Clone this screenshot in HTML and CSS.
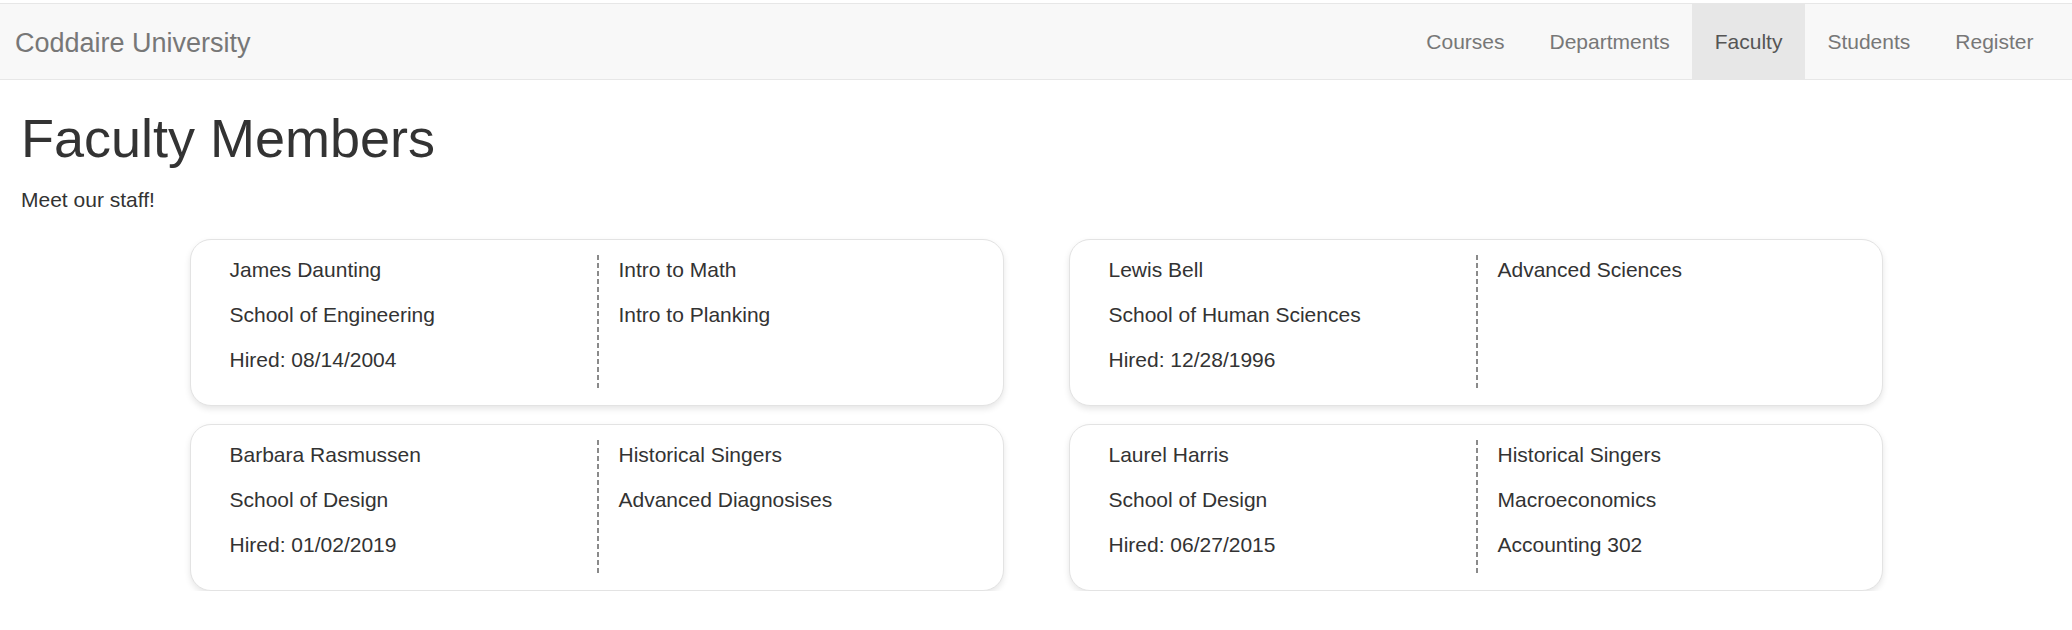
FILE: index.html
```html
<!DOCTYPE html>
<html lang="en">
<head>
<meta charset="utf-8">
<title>Faculty Members - Coddaire University</title>
<link rel="stylesheet" href="styles.css">
</head>
<body>
<nav class="navbar">
  <a class="brand" href="#">Coddaire University</a>
  <ul class="nav">
    <li><a href="#">Courses</a></li>
    <li><a href="#">Departments</a></li>
    <li class="active"><a href="#">Faculty</a></li>
    <li><a href="#">Students</a></li>
    <li><a href="#">Register</a></li>
  </ul>
</nav>
<main class="content">
  <h1 class="title">Faculty Members</h1>
  <p class="lead">Meet our staff!</p>
  <div class="cards">
    <div class="card">
      <div class="col info">
        <p>James Daunting</p>
        <p>School of Engineering</p>
        <p>Hired: 08/14/2004</p>
      </div>
      <div class="col courses">
        <p>Intro to Math</p>
        <p>Intro to Planking</p>
      </div>
    </div>
    <div class="card">
      <div class="col info">
        <p>Lewis Bell</p>
        <p>School of Human Sciences</p>
        <p>Hired: 12/28/1996</p>
      </div>
      <div class="col courses">
        <p>Advanced Sciences</p>
      </div>
    </div>
    <div class="card">
      <div class="col info">
        <p>Barbara Rasmussen</p>
        <p>School of Design</p>
        <p>Hired: 01/02/2019</p>
      </div>
      <div class="col courses">
        <p>Historical Singers</p>
        <p>Advanced Diagnosises</p>
      </div>
    </div>
    <div class="card">
      <div class="col info">
        <p>Laurel Harris</p>
        <p>School of Design</p>
        <p>Hired: 06/27/2015</p>
      </div>
      <div class="col courses">
        <p>Historical Singers</p>
        <p>Macroeconomics</p>
        <p>Accounting 302</p>
      </div>
    </div>
  </div>
</main>
</body>
</html>
```

FILE: styles.css
```css
* { box-sizing: border-box; }

html, body {
  margin: 0;
  background: #fff;
}

body {
  padding-top: 3px;
  font-family: "Liberation Sans", Arial, sans-serif;
  font-size: 21px;
  line-height: 30px;
  color: #333;
}

a { text-decoration: none; }

.navbar {
  display: flex;
  justify-content: space-between;
  align-items: stretch;
  height: 77px;
  padding: 0 16px 0 15px;
  background: #f8f8f8;
  border-top: 1px solid #e7e7e7;
  border-bottom: 1px solid #e7e7e7;
  margin-bottom: 29px;
}

.brand {
  padding-top: 3px;
  font-size: 27px;
  line-height: 72px;
  color: #777;
}

.nav {
  display: flex;
  margin: 0;
  padding: 0;
  list-style: none;
}

.nav li a {
  display: block;
  padding: 0 22.5px;
  line-height: 75px;
  color: #777;
}

.nav li.active a {
  background: #e7e7e7;
  color: #555;
}

.content {
  padding: 0 21px;
}

.title {
  margin: 0 0 17px;
  font-size: 54px;
  font-weight: 500;
  line-height: 59px;
  color: #333;
}

.lead {
  margin: 0 0 15px;
}

.cards {
  display: grid;
  grid-template-columns: 814px 814px;
  justify-content: center;
  column-gap: 65px;
  row-gap: 18px;
  margin-top: 24px;
  margin-left: -21px;
  margin-right: -21px;
}

.card {
  display: grid;
  grid-template-columns: 1fr 1fr;
  padding: 15px 0;
  border: 1px solid #e3e3e3;
  border-radius: 21px;
  background: #fff;
  box-shadow: 0 3px 6px rgba(0, 0, 0, 0.10);
}

.col p {
  margin: 0 0 15px;
}

.info {
  padding-left: 39px;
}

.courses {
  padding-left: 22px;
  background-image: repeating-linear-gradient(to bottom, #8a8a8a 0, #8a8a8a 5px, transparent 5px, transparent 8px);
  background-size: 2px 100%;
  background-repeat: no-repeat;
  background-position: left top;
}
```
